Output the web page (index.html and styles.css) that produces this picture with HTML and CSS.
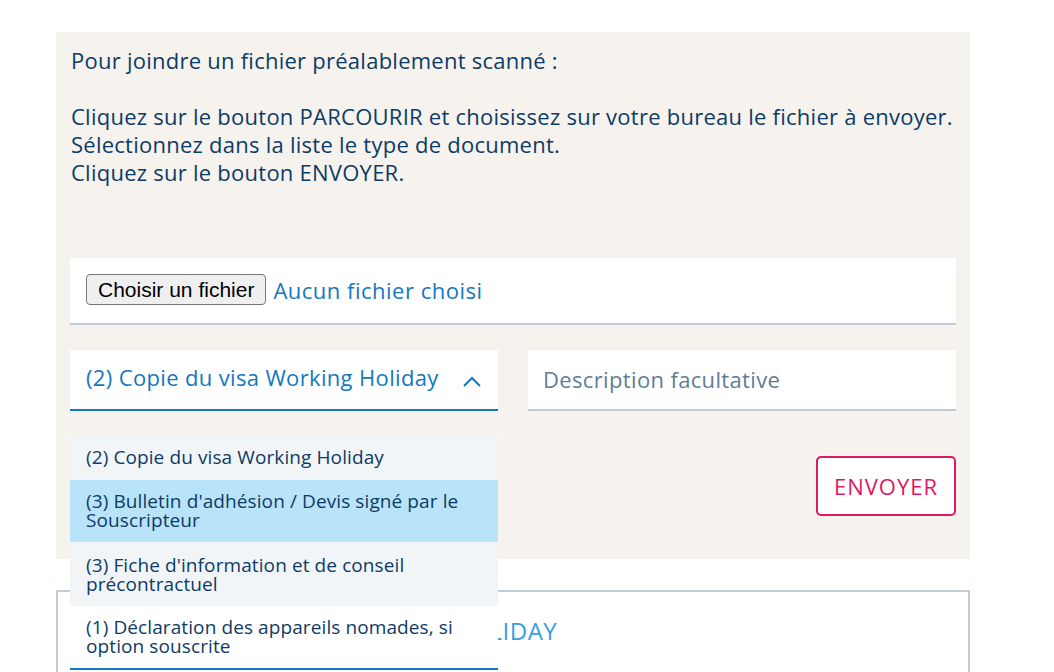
FILE: index.html
```html
<!DOCTYPE html>
<html lang="fr">
<head>
  <meta charset="UTF-8">
  <meta name="viewport" content="width=device-width, initial-scale=1.0">
  <title>Joindre un fichier</title>
  <link rel="stylesheet" href="styles.css">
</head>
<body>
  <div class="upload-panel">
    <div class="intro">
      <p>Pour joindre un fichier préalablement scanné :</p>
      <p class="blank">&nbsp;</p>
      <p>Cliquez sur le bouton PARCOURIR et choisissez sur votre bureau le fichier à envoyer.</p>
      <p>Sélectionnez dans la liste le type de document.</p>
      <p>Cliquez sur le bouton ENVOYER.</p>
    </div>

    <div class="file-box">
      <input type="file" id="file" class="file-input">
      <label for="file" class="file-btn">Choisir un fichier</label>
      <span class="file-name">Aucun fichier choisi</span>
    </div>

    <div class="fields">
      <div class="select-wrap">
        <div class="select open">
          <span>(2) Copie du visa Working Holiday</span>
          <svg class="chevron" width="20" height="12" viewBox="0 0 20 12">
            <path d="M2 10 L10 2 L18 10" fill="none" stroke="#1478c0" stroke-width="2"/>
          </svg>
        </div>
        <ul class="options">
          <li>(2) Copie du visa Working Holiday</li>
          <li class="active">(3) Bulletin d'adhésion / Devis signé par le<br>Souscripteur</li>
          <li class="tall">(3) Fiche d'information et de conseil<br>précontractuel</li>
          <li class="last">(1) Déclaration des appareils nomades, si<br>option souscrite</li>
        </ul>
      </div>
      <input type="text" class="description" placeholder="Description facultative">
    </div>

    <div class="actions">
      <button type="button" class="send-btn">ENVOYER</button>
    </div>
  </div>

  <div class="doc-box">
    <span class="doc-title">(2) COPIE DU VISA WORKING HOLIDAY</span>
  </div>
</body>
</html>
```

FILE: styles.css
```css
body {
  margin: 0;
  font-family: "Open Sans", Arial, sans-serif;
  color: #0d3b66;
  background: #fff;
}
.upload-panel {
  width: 914px;
  margin: 32px 0 0 56px;
  box-sizing: border-box;
  padding: 14px 14px 43px;
  background: #f6f3ef;
}
.intro {
  padding-left: 1px;
  font-size: 22px;
  letter-spacing: 0.25px;
  line-height: 28px;
}
.intro p {
  margin: 0;
  white-space: nowrap;
}
.file-box {
  margin-top: 72px;
  height: 67px;
  box-sizing: border-box;
  display: flex;
  align-items: center;
  gap: 7px;
  padding: 0 16px 2px;
  background: #fff;
  border-bottom: 2px solid #c3ccd6;
}
.file-input {
  display: none;
}
.file-btn {
  height: 31px;
  box-sizing: border-box;
  padding: 0 11px;
  display: flex;
  align-items: center;
  background: #efefef;
  border: 1px solid #767676;
  border-radius: 4px;
  font-family: "Liberation Sans", Arial, sans-serif;
  font-size: 21px;
  color: #000;
}
.file-name {
  font-size: 22px;
  letter-spacing: 0.5px;
  color: #1478c0;
}
.fields {
  margin-top: 25px;
  display: flex;
  gap: 30px;
}
.select-wrap {
  position: relative;
  width: 428px;
}
.select {
  height: 61px;
  box-sizing: border-box;
  padding: 0 16px 6px;
  display: flex;
  align-items: center;
  justify-content: space-between;
  background: #fff;
  border-bottom: 2px solid #1478c0;
  font-size: 22px;
  letter-spacing: 0.35px;
  color: #1478c0;
}
.chevron {
  margin-top: 10px;
}
.options {
  position: absolute;
  top: 85px;
  left: 0;
  width: 428px;
  margin: 0;
  padding: 0;
  list-style: none;
  z-index: 2;
  font-size: 19px;
  letter-spacing: 0.1px;
  line-height: 19px;
  color: #0d3b66;
}
.options li {
  padding: 12px 16px;
  white-space: nowrap;
  background: #f2f5f8;
}
.options li:first-child {
  height: 45px;
  box-sizing: border-box;
  padding-top: 13px;
}
.options li.active {
  background: #b8e3f8;
}
.options li.tall {
  padding-top: 14px;
}
.options li.last {
  background: #fff;
  border-bottom: 2px solid #1478c0;
}
.description {
  width: 428px;
  height: 61px;
  box-sizing: border-box;
  padding: 0 15px 2px;
  border: none;
  border-bottom: 2px solid #c3ccd6;
  background: #fff;
  font-family: "Open Sans", Arial, sans-serif;
  font-size: 22px;
  letter-spacing: 0.35px;
  color: #0d3b66;
}
.description::placeholder {
  color: #5f7d96;
}
.actions {
  margin-top: 45px;
  display: flex;
  justify-content: flex-end;
}
.send-btn {
  width: 140px;
  height: 60px;
  background: #fff;
  border: 2px solid #e0185f;
  border-radius: 5px;
  font-family: "Open Sans", Arial, sans-serif;
  font-size: 22px;
  letter-spacing: 1px;
  color: #e0185f;
  cursor: pointer;
}
.doc-box {
  width: 914px;
  height: 120px;
  box-sizing: border-box;
  margin: 31px 0 0 56px;
  padding: 22px 30px 22px 57px;
  border: 2px solid #c3ccd6;
  border-bottom: none;
}
.doc-title {
  font-size: 24px;
  letter-spacing: 0.5px;
  color: #3a9fdc;
}
```
